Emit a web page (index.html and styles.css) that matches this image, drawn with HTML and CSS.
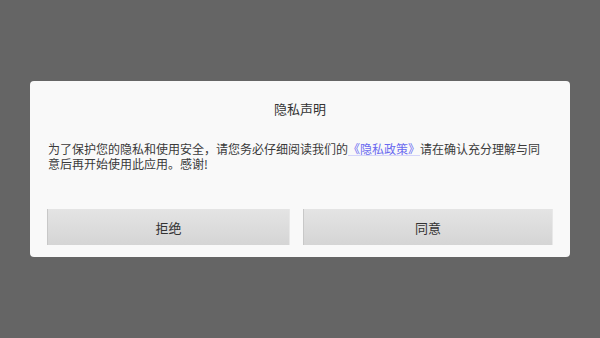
FILE: index.html
```html
<!DOCTYPE html>
<html lang="zh-CN">
<head>
    <meta charset="UTF-8">
    <meta name="viewport" content="width=device-width, initial-scale=1.0">
    <title>隐私声明</title>
    <link rel="stylesheet" href="styles.css">
</head>
<body>

    <div class="overlay">
        <div class="dialog">
            <h2 class="dialog-title">隐私声明</h2>
            <p class="dialog-text">为了保护您的隐私和使用安全，请您务必仔细阅读我们的<a href="#" class="policy-link">《隐私政策》</a>请在确认充分理解与同意后再开始使用此应用。感谢!</p>
            <div class="dialog-buttons">
                <button class="btn">拒绝</button>
                <button class="btn">同意</button>
            </div>
        </div>
    </div>

</body>
</html>
```

FILE: styles.css
```css
html, body {
    margin: 0;
    height: 100%;
}

body {
    font-family: "Noto Sans CJK SC", "Noto Sans", sans-serif;
    background-color: #656565;
    color: #333;
}

.overlay {
    height: 100%;
    display: flex;
    align-items: center;
    justify-content: center;
}

.dialog {
    width: 540px;
    box-sizing: border-box;
    padding: 20px 17px 12px 17px;
    background-color: #f9f9f9;
    border-radius: 4px;
}

.dialog-title {
    margin: 0;
    font-size: 13px;
    font-weight: normal;
    line-height: 16px;
    text-align: center;
}

.dialog-text {
    margin: 24px 8px 38px 1px;
    font-size: 12px;
    line-height: 15px;
    color: #3a3a3a;
}

    .dialog-text .policy-link {
        color: #6a6af0;
        text-decoration: underline;
        text-decoration-color: #d4d4fa;
    }

.dialog-buttons {
    display: grid;
    grid-template-columns: 243fr 250fr;
    gap: 13px;
}

    .dialog-buttons .btn {
        height: 36px;
        font-family: inherit;
        font-size: 13px;
        color: #333;
        background: linear-gradient(#e4e4e4, #d5d5d5);
        border: none;
        border-left: 1px solid #c8c8c8;
        border-right: 1px solid #e8e8e8;
        cursor: pointer;
    }
```
